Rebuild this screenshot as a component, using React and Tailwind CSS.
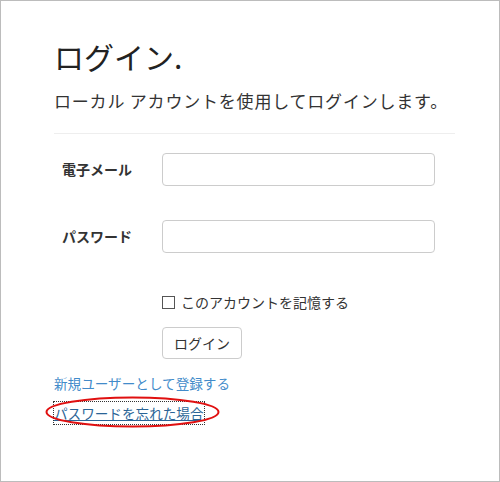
import React from 'react';

const font = { fontFamily: '"Noto Sans CJK JP", "Noto Sans", sans-serif' };

const Field = ({ label, type }) => (
  <div className="flex items-center h-[33px]">
    <label className="w-[108px] pr-[30px] text-right text-[14px] font-bold text-[#333]">{label}</label>
    <input
      type={type}
      className="w-[273px] h-[33px] rounded-[4px] border border-[#cccccc] bg-white outline-none"
    />
  </div>
);

export default function App() {
  return (
    <div className="w-[500px] h-[482px] border border-[#bcbcbc] bg-white text-[#333]" style={font}>
      <div className="pl-[53px] pr-[44px]">
        <h2 className="mt-[35px] text-[30px] leading-[40px] font-normal text-[#222]">ログイン.</h2>
        <p className="mt-[13px] text-[17px] leading-[24px] tracking-[0.8px] text-[#333]">ローカル アカウントを使用してログインします。</p>
        <hr className="mt-[20px] border-t border-[#eeeeee]" />

        <div className="mt-[19px] flex flex-col gap-[34px]">
          <Field label="電子メール" type="email" />
          <Field label="パスワード" type="password" />
        </div>

        <div className="mt-[41px] pl-[108px] flex items-center gap-[6px] h-[16px]">
          <span className="w-[13px] h-[13px] border border-[#555] bg-white" />
          <span className="text-[14px] leading-[16px] text-[#333]">このアカウントを記憶する</span>
        </div>

        <button className="ml-[108px] mt-[17px] w-[80px] h-[32px] rounded-[4px] border border-[#cccccc] bg-white text-[14px] text-[#333]">
          ログイン
        </button>

        <div className="mt-[14px] flex flex-col items-start">
          <a className="text-[13.6px] leading-[20px] text-[#428bca]">新規ユーザーとして登録する</a>
          <div className="relative mt-[9px]">
            <a className="block text-[13.6px] leading-[22px] text-[#2a6496] underline outline-1 outline-dotted outline-[#333]">
              パスワードを忘れた場合
            </a>
            <svg className="absolute left-[-9px] top-[-6px]" width="175" height="32" viewBox="0 0 175 32">
              <ellipse cx="87.5" cy="16" rx="86" ry="14.5" fill="none" stroke="#e01010" strokeWidth="2" />
            </svg>
          </div>
        </div>
      </div>
    </div>
  );
}
